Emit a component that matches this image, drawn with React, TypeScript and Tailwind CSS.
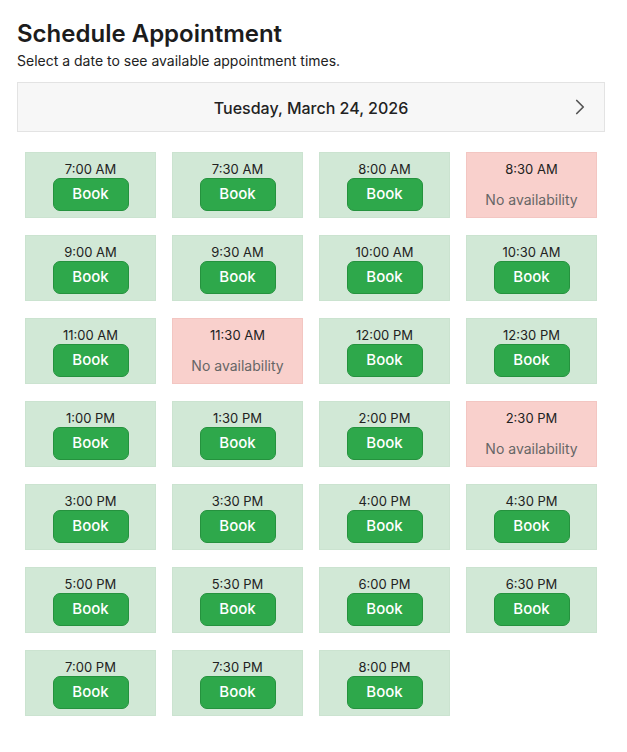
import { ChevronRight } from 'lucide-react';

type Slot = { time: string; available: boolean };

const slots: Slot[] = [
    '7:00 AM', '7:30 AM', '8:00 AM', '8:30 AM',
    '9:00 AM', '9:30 AM', '10:00 AM', '10:30 AM',
    '11:00 AM', '11:30 AM', '12:00 PM', '12:30 PM',
    '1:00 PM', '1:30 PM', '2:00 PM', '2:30 PM',
    '3:00 PM', '3:30 PM', '4:00 PM', '4:30 PM',
    '5:00 PM', '5:30 PM', '6:00 PM', '6:30 PM',
    '7:00 PM', '7:30 PM', '8:00 PM',
].map((time) => ({
    time,
    available: !['8:30 AM', '11:30 AM', '2:30 PM'].includes(time),
}));

const SlotCard = ({ slot }: { slot: Slot }) => {
    if (!slot.available) {
        return (
            <div className="h-[66px] bg-[#f9d0cc] border border-[#f3c6c2] flex flex-col items-center pt-[7px]">
                <div className="text-[13px] leading-[18px] text-[#222]">{slot.time}</div>
                <div className="mt-[12px] text-[14px] leading-[20px] text-[#666]">
                    No availability
                </div>
            </div>
        );
    }
    return (
        <div className="h-[66px] bg-[#d1e8d6] border border-[#cbe3d0] flex flex-col items-center pt-[7px]">
            <div className="text-[13px] leading-[18px] text-[#222]">{slot.time}</div>
            <button className="w-[76px] h-[33px] rounded-[7px] bg-[#2ea84b] border border-[#25923e] text-white text-[15px] font-medium">
                Book
            </button>
        </div>
    );
};

export default function App() {
    return (
        <div className="pl-[17px] pr-[22px] pt-[18px] pb-6 bg-white font-['Inter',sans-serif] text-[#1c1c1c]">
            <h1 className="text-[24px] leading-[32px] font-semibold">
                Schedule Appointment
            </h1>
            <p className="text-[14px] leading-[20px] mt-[1px] text-[#222]">
                Select a date to see available appointment times.
            </p>

            <div className="mt-[11px] h-[50px] bg-[#f7f7f7] border border-[#e3e3e3] flex items-center relative">
                <div className="flex-1 text-center text-[16px] font-medium text-[#222] pt-[1px]">
                    Tuesday, March 24, 2026
                </div>
                <ChevronRight
                    className="absolute right-[11px] top-[11px] text-[#555]"
                    size={26}
                    strokeWidth={1.6}
                />
            </div>

            <div className="grid grid-cols-4 gap-x-4 gap-y-[17px] px-2 mt-[20px]">
                {slots.map((s) => (
                    <SlotCard key={s.time} slot={s} />
                ))}
            </div>
        </div>
    );
}
